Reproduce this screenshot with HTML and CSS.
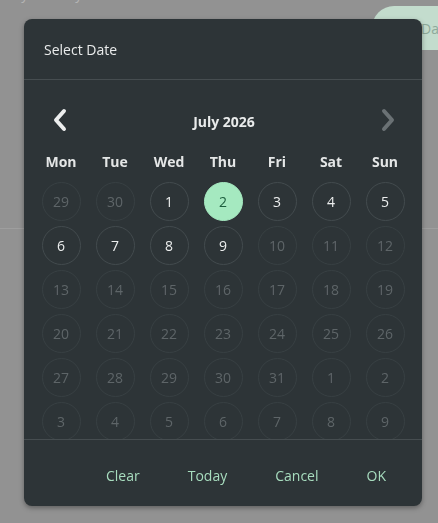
FILE: index.html
```html
<!DOCTYPE html>
<html lang="en">
<head>
    <meta charset="UTF-8">
    <meta name="viewport" content="width=device-width, initial-scale=1.0">
    <title>Select Date</title>
    <link rel="stylesheet" href="styles.css">
</head>
<body>

    <div class="page">
        <div class="top-row">
            <div class="summary">Tuesday · 30 days</div>
            <button class="pill">Date</button>
        </div>
        <div class="rule"></div>
    </div>

    <div class="scrim">
        <div class="dialog">
            <div class="dialog-head">Select Date</div>

            <div class="dialog-body">
                <div class="nav">
                    <button class="nav-btn">
                        <svg width="24" height="24" viewBox="0 0 24 24"><polyline points="15,3 7,12 15,21" fill="none" stroke="#eceeee" stroke-width="4" stroke-linecap="round" stroke-linejoin="round"/></svg>
                    </button>
                    <div class="month">July 2026</div>
                    <button class="nav-btn off">
                        <svg width="24" height="24" viewBox="0 0 24 24"><polyline points="9,3 17,12 9,21" fill="none" stroke="#6a7174" stroke-width="4" stroke-linecap="round" stroke-linejoin="round"/></svg>
                    </button>
                </div>

                <div class="weekdays">
                    <span>Mon</span><span>Tue</span><span>Wed</span><span>Thu</span><span>Fri</span><span>Sat</span><span>Sun</span>
                </div>

                <div class="days" id="days"></div>
            </div>

            <div class="dialog-foot">
                <button class="text-btn">Clear</button>
                <button class="text-btn">Today</button>
                <button class="text-btn">Cancel</button>
                <button class="text-btn">OK</button>
            </div>
        </div>
    </div>

    <script>
        // July 2026 starts on a Wednesday; only 1-9 can be picked
        const days = document.getElementById('days');
        const cells = [29, 30];
        for (let d = 1; d <= 31; d++) cells.push(d);
        for (let d = 1; d <= 9; d++) cells.push(d);

        cells.forEach((n, i) => {
            const cell = document.createElement('div');
            cell.className = 'day';
            const inMonth = i >= 2 && i < 33;
            if (inMonth && n <= 9) cell.classList.add('active');
            if (inMonth && n === 2) cell.classList.add('selected');
            cell.textContent = n;
            days.appendChild(cell);
        });
    </script>

</body>
</html>
```

FILE: styles.css
```css
body {
    margin: 0;
    background-color: #929292;
    font-family: "Open Sans", "Noto Sans", sans-serif;
    font-size: 14px;
    height: 523px;
    overflow: hidden;
}
button {
    font-family: inherit;
    font-size: 14px;
    border: none;
    background: none;
    cursor: pointer;
    padding: 0;
}
.top-row {
    display: flex;
    justify-content: space-between;
    align-items: flex-start;
}
.summary {
    margin-top: -16px;
    margin-left: -26px;
    color: #b4b4b4;
    line-height: 20px;
}
.pill {
    margin-top: 6px;
    margin-right: -34px;
    width: 100px;
    height: 44px;
    padding-left: 49px;
    text-align: left;
    border-radius: 22px;
    background-color: #c3dccd;
    color: #8ea99a;
}
.rule {
    margin-top: 178px;
    height: 1px;
    background-color: #9e9e9e;
}
.scrim {
    position: fixed;
    inset: 0;
    padding: 19px 0 0 24px;
}
.dialog {
    width: 398px;
    background-color: #2d3437;
    border-radius: 8px;
    box-shadow: 0 2px 5px rgba(0, 0, 0, 0.35);
    overflow: hidden;
}
.dialog-head {
    height: 60px;
    display: flex;
    align-items: center;
    padding-left: 20px;
    color: #e9ebeb;
    border-bottom: 1px solid #464d50;
}
.dialog-body {
    height: 360px;
    overflow: hidden;
    padding: 20px 10px 0;
    box-sizing: border-box;
    border-bottom: 1px solid #464d50;
}
.nav {
    display: flex;
    align-items: center;
    justify-content: space-between;
    height: 40px;
    padding: 0 13px 0 15px;
    margin-bottom: 3px;
}
.nav-btn {
    width: 24px;
    height: 24px;
    display: flex;
}
.month {
    font-weight: bold;
    color: #e9ebeb;
    padding-top: 2px;
}
.weekdays {
    display: grid;
    grid-template-columns: repeat(7, 54px);
    height: 36px;
    align-items: center;
    text-align: center;
    font-weight: bold;
    color: #e4e6e6;
}
.days {
    display: grid;
    grid-template-columns: repeat(7, 54px);
    grid-auto-rows: 44px;
    justify-items: center;
    align-items: center;
}
.day {
    width: 39px;
    height: 39px;
    box-sizing: border-box;
    border-radius: 50%;
    border: 1px solid #384043;
    display: flex;
    align-items: center;
    justify-content: center;
    color: #5e6568;
}
.day.active {
    color: #eceeee;
    border-color: #434b4e;
}
.day.selected {
    background-color: #a5e9c0;
    border-color: #a5e9c0;
    color: #1d5e3e;
}
.dialog-foot {
    height: 66px;
    display: flex;
    align-items: center;
    justify-content: flex-end;
    gap: 16px;
    padding: 4px 20px 0;
    box-sizing: border-box;
}
.text-btn {
    color: #a7dcbe;
    padding: 8px 16px;
}
```
